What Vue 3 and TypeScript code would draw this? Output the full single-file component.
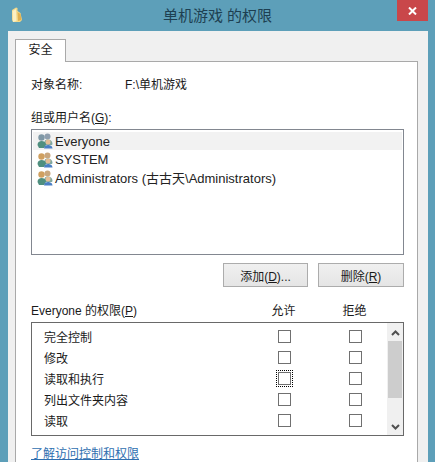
<template>
  <div class="window">
    <header class="titlebar">
      <svg class="folder" width="13" height="16" viewBox="0 0 13 16">
        <path d="M2 3 L6 0.5 L7.5 1 L7.5 4 L10.5 6 L12 13 L10 15 L3 15 L2 13 Z" fill="#f3d98b" />
        <path d="M2.5 4 L6 2 L6.5 14 L3 15 Z" fill="#fbf0c4" />
        <path d="M7.5 5 L10.5 7 L11.5 13 L8 14 Z" fill="#e0b050" />
      </svg>
      <span class="title">单机游戏 的权限</span>
      <div class="close">
        <svg width="9" height="8" viewBox="0 0 9 8">
          <path d="M1 0.5 L8 7.5 M8 0.5 L1 7.5" stroke="#fff" stroke-width="2" />
        </svg>
      </div>
    </header>

    <main class="client">
      <div class="tabs">
        <div class="tab">安全</div>
      </div>
      <section class="panel">
        <div class="object-row">
          <span class="object-label">对象名称:</span>
          <span>F:\单机游戏</span>
        </div>

        <div class="group-label">组或用户名(<u>G</u>):</div>
        <ul class="user-list">
          <li v-for="(user, i) in users" :key="user" class="user" :class="{ selected: i === 0 }">
            <svg class="user-icon" width="17" height="16" viewBox="0 0 17 16">
              <circle cx="10.5" cy="3.5" r="3" :fill="i === 0 ? '#8f9fae' : '#c9a77e'" />
              <path d="M7 12 C7 7.5 8.5 6.5 11 6.5 C13.5 6.5 15.5 8 15.5 11 L15 12 Z" fill="#7fa8a0" />
              <circle cx="4.5" cy="4.5" r="3.2" :fill="i === 0 ? '#7f98a6' : '#d0a060'" />
              <path d="M0.5 12 C0.5 9 2.5 8 4.5 8 C7 8 9 9 9 12 L7 15 L2 15 Z" fill="#4f8f7f" />
              <circle cx="11" cy="9" r="2.5" fill="#e3bd95" />
              <path d="M7 15.5 C7 13 9 12 11 12 C13 12 15.5 13 15.5 15.5 Z" fill="#4a7fc4" />
            </svg>
            <span>{{ user }}</span>
          </li>
        </ul>

        <div class="actions">
          <button class="btn add">添加(<u>D</u>)...</button>
          <button class="btn remove">删除(<u>R</u>)</button>
        </div>

        <div class="perm-head">
          <span class="perm-title">Everyone 的权限(<u>P</u>)</span>
          <span class="col">允许</span>
          <span class="col deny">拒绝</span>
        </div>
        <div class="perm-box">
          <div class="perm-rows">
            <div v-for="(perm, i) in permissions" :key="perm" class="perm-row">
              <span class="perm-name">{{ perm }}</span>
              <span class="cell"><span class="check" :class="{ focused: i === 2 }"></span></span>
              <span class="cell deny"><span class="check"></span></span>
            </div>
          </div>
          <div class="scrollbar">
            <svg width="9" height="6" viewBox="0 0 9 6">
              <path d="M1 5 L4.5 1.5 L8 5" fill="none" stroke="#505050" stroke-width="2" />
            </svg>
            <div class="track"><div class="thumb"></div></div>
            <svg width="9" height="6" viewBox="0 0 9 6">
              <path d="M1 1 L4.5 4.5 L8 1" fill="none" stroke="#505050" stroke-width="2" />
            </svg>
          </div>
        </div>

        <a class="link">了解访问控制和权限</a>
      </section>
    </main>
  </div>
</template>

<script setup lang="ts">
const users: string[] = ['Everyone', 'SYSTEM', 'Administrators (古古天\\Administrators)']
const permissions: string[] = ['完全控制', '修改', '读取和执行', '列出文件夹内容', '读取']
</script>

<style scoped>
.window {
  width: 435px;
  height: 462px;
  overflow: hidden;
  box-sizing: border-box;
  background: #5d9fb9;
  padding: 0 7px 0 7px;
  font-family: "Liberation Sans", "Noto Sans CJK SC", sans-serif;
  font-size: 12px;
  color: #1a1a1a;
}

.titlebar {
  height: 31px;
  display: flex;
  align-items: flex-start;
  position: relative;
}

.folder {
  margin: 7px 0 0 3px;
}

.title {
  flex: 1;
  text-align: center;
  font-size: 15px;
  line-height: 31px;
  color: #1d3f52;
  padding-right: 16px;
}

.close {
  position: absolute;
  top: 0;
  right: 0;
  width: 31px;
  height: 21px;
  background: #c9474a;
  display: flex;
  align-items: center;
  justify-content: center;
}

.client {
  background: #f0f0f0;
  margin-left: 1px;
  margin-right: 0;
  height: 431px;
  padding: 8px 10px 0 7px;
  box-sizing: border-box;
}

.tabs {
  display: flex;
  height: 22px;
}

.tab {
  width: 51px;
  height: 23px;
  box-sizing: border-box;
  background: #fff;
  border: 1px solid #a9a9a9;
  border-bottom: none;
  text-align: center;
  line-height: 21px;
  position: relative;
  z-index: 1;
}

.panel {
  background: #fff;
  border: 1px solid #a9a9a9;
  height: 420px;
  box-sizing: border-box;
  padding: 0 13px 0 15px;
  position: relative;
}

.object-row {
  display: flex;
  margin-top: 15px;
  line-height: 16px;
}

.object-label {
  width: 94px;
}

.group-label {
  margin-top: 17px;
  line-height: 16px;
}

.user-list {
  list-style: none;
  margin: 3px 0 0;
  padding: 2px 1px;
  height: 126px;
  box-sizing: border-box;
  border: 1px solid #828790;
}

.user {
  display: flex;
  align-items: center;
  gap: 1px;
  height: 18.4px;
  padding-left: 4px;
  font-size: 13px;
  color: #222;
}

.user.selected {
  background: #f2f2f2;
}

.user-icon {
  flex: none;
}

.actions {
  display: flex;
  justify-content: flex-end;
  gap: 10px;
  margin-top: 8px;
}

.btn {
  height: 24px;
  box-sizing: border-box;
  border: 1px solid #acacac;
  background: linear-gradient(#f0f0f0, #e5e5e5);
  font: inherit;
  color: #1a1a1a;
  padding: 0;
}

.add {
  width: 85px;
}

.remove {
  width: 86px;
}

.perm-head {
  display: flex;
  margin-top: 15px;
  line-height: 18px;
  height: 20px;
}

.perm-title {
  flex: 1;
}

.col {
  width: 71px;
  text-align: center;
}

.col.deny {
  margin-right: 14px;
}

.perm-box {
  display: flex;
  height: 114px;
  box-sizing: border-box;
  border: 1px solid #696969;
}

.perm-rows {
  flex: 1;
  padding-top: 3px;
}

.perm-row {
  display: flex;
  align-items: center;
  height: 21px;
  padding-left: 12px;
}

.perm-name {
  flex: 1;
}

.cell {
  width: 71px;
  display: flex;
  justify-content: center;
}

.cell.deny {
  width: 70px;
  margin-right: -3px;
}

.check {
  width: 13px;
  height: 13px;
  box-sizing: border-box;
  border: 1px solid #707070;
  background: #fff;
  position: relative;
}

.check.focused::after {
  content: "";
  position: absolute;
  inset: -3px;
  border: 1px dotted #000;
}

.scrollbar {
  width: 16px;
  flex: none;
  background: #f0f0f0;
  display: flex;
  flex-direction: column;
  align-items: center;
  padding: 7px 0 5px;
  box-sizing: border-box;
}

.track {
  flex: 1;
  width: 100%;
  margin: 5px 0;
}

.thumb {
  height: 57px;
  margin: 0 1px;
  background: #cdcdcd;
}

.link {
  display: block;
  margin-top: 10px;
  line-height: 16px;
  color: #2f6fb0;
  text-decoration: underline;
}
</style>
<style>
html, body { margin: 0; background: #5d9fb9; }
</style>
